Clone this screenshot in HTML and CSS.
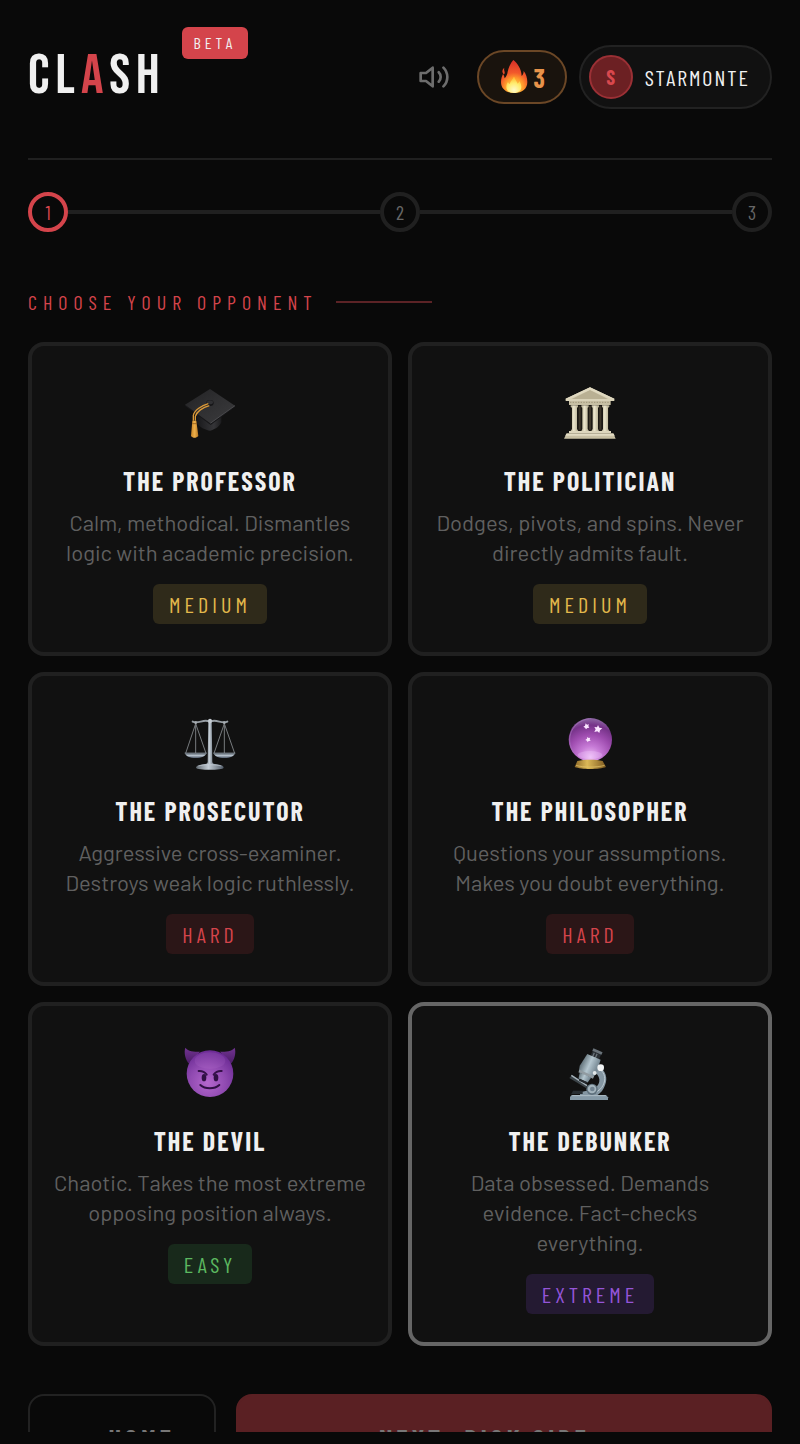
FILE: index.html
```html
<!DOCTYPE html>
<html lang="en">
<head>
    <meta charset="UTF-8">
    <meta name="viewport" content="width=device-width, initial-scale=1.0">
    <title>Clash</title>
    <link rel="stylesheet" href="styles.css">
</head>
<body>
    <main class="app">
        <header class="header">
            <h1 class="logo">CL<span>A</span>SH</h1>
            <span class="beta">BETA</span>
            <div class="header-actions">
                <button class="sound" type="button" aria-label="Sound">
                    <svg viewBox="0 0 24 24" width="32" height="32" fill="none" stroke="currentColor" stroke-width="2" stroke-linejoin="round" stroke-linecap="round">
                        <path d="M11 5 6 9H2v6h4l5 4z"/>
                        <path d="M15.54 8.46a5 5 0 0 1 0 7.07M19.07 4.93a10 10 0 0 1 0 14.14"/>
                    </svg>
                </button>
                <div class="streak">
                    <svg viewBox="302 122 90 102" width="30" height="34">
                        <defs>
                            <radialGradient id="flame" cx="348" cy="204" r="76" gradientUnits="userSpaceOnUse">
                                <stop offset="0" stop-color="#ffe05a"/>
                                <stop offset=".36" stop-color="#ff9a2c"/>
                                <stop offset=".58" stop-color="#f2592b"/>
                                <stop offset="1" stop-color="#dc3428"/>
                            </radialGradient>
                            <radialGradient id="flameCore" cx="347" cy="212" r="34" gradientUnits="userSpaceOnUse">
                                <stop offset="0" stop-color="#fff9c9"/>
                                <stop offset=".6" stop-color="#ffed70"/>
                                <stop offset="1" stop-color="#ffc43b"/>
                            </radialGradient>
                        </defs>
                        <path fill="url(#flame)" d="M345 122c12 10 24 26 25 48 4-4 6-9 6-15 7 8 11 21 11 33 0 20-15 33-39 33-25 0-40-13-40-33 0-11 3-16 6-24 3 4 4 8 5 13 6-7 8-13 9-20 2-11 8-25 17-35z"/>
                        <path fill="#e64a2a" d="M318 145c-7 6-8 14-1 20 6-6-2-11 1-20z"/>
                        <path fill="url(#flameCore)" d="M347 172c4 9 8 13 11 21 3-2 4-5 5-8 4 6 6 12 6 18 0 11-9 18-22 18-14 0-23-7-23-18 0-7 2-11 5-15 1 3 3 5 5 6 2-10 10-14 13-22z"/>
                    </svg>
                    <span>3</span>
                </div>
                <button class="profile" type="button">
                    <span class="avatar">S</span>
                    <span class="username">STARMONTE</span>
                </button>
            </div>
        </header>

        <ol class="steps">
            <li class="step active">1</li>
            <li class="step-line"></li>
            <li class="step">2</li>
            <li class="step-line"></li>
            <li class="step">3</li>
        </ol>

        <h2 class="section-title">CHOOSE YOUR OPPONENT</h2>

        <div class="opponents">
            <button class="card" type="button">
                <svg class="card-icon" viewBox="36 30 168 168">
                    <defs>
                        <linearGradient id="capTop" x1="0" y1="0" x2="1" y2="1">
                            <stop offset="0" stop-color="#222224"/>
                            <stop offset=".5" stop-color="#303032"/>
                            <stop offset="1" stop-color="#3b3b3d"/>
                        </linearGradient>
                        <linearGradient id="tassel" x1="0" y1="0" x2="1" y2="0">
                            <stop offset="0" stop-color="#c98527"/>
                            <stop offset=".5" stop-color="#edaf4a"/>
                            <stop offset="1" stop-color="#b87722"/>
                        </linearGradient>
                        <linearGradient id="capBase" x1="0" y1="0" x2="1" y2="0">
                            <stop offset="0" stop-color="#18181a"/>
                            <stop offset=".7" stop-color="#353538"/>
                            <stop offset="1" stop-color="#1c1c1e"/>
                        </linearGradient>
                    </defs>
                    <path fill="url(#capBase)" d="M79 112v31c9 13 27 22 42 24 17-5 29-14 33-25v-33l-33 23z"/>
                    <path fill="#18181a" d="m45 89 77 56 73-53v4l-73 54-77-57z"/>
                    <path fill="url(#capTop)" d="m120 42 75 50-74 53-76-56z"/>
                    <path fill="none" stroke="#5a5a5d" stroke-width="2" d="m121 145 74-53"/>
                    <ellipse cx="120" cy="84" rx="11" ry="9" fill="#151517"/>
                    <ellipse cx="120" cy="82" rx="9" ry="6" fill="#303033"/>
                    <path fill="none" stroke="#dc9a38" stroke-width="4" d="M115 86c-20 6-42 19-45 35v16M118 92c-20 5-38 18-42 32v13"/>
                    <path fill="url(#tassel)" d="M67 137h12l6 46c-6 7-17 7-22 0z"/>
                    <path stroke="#7b4b15" stroke-width="2" d="M67 146h13"/>
                </svg>
                <span class="card-name">THE PROFESSOR</span>
                <span class="card-desc">Calm, methodical. Dismantles logic with academic precision.</span>
                <span class="level medium">MEDIUM</span>
            </button>

            <button class="card" type="button">
                <svg class="card-icon" viewBox="36 30 168 168">
                    <defs>
                        <linearGradient id="column" x1="0" y1="0" x2="1" y2="0">
                            <stop offset="0" stop-color="#b9b294"/>
                            <stop offset=".4" stop-color="#ece6cd"/>
                            <stop offset="1" stop-color="#b3ab8e"/>
                        </linearGradient>
                    </defs>
                    <path fill="#1c1914" d="M61 91h116v78H61z"/>
                    <path fill="#3c3529" d="M86 93h6v71h-6zm31 0h6v71h-6zm31 0h6v71h-6z"/>
                    <path fill="#d9d2b8" d="m120 37 73 34v7H47v-7z"/>
                    <path fill="#b9b093" d="m120 45 54 27H65z"/>
                    <path fill="#e0d9c0" d="m120 37 73 34-1 4-72-31-72 31-1-4z"/>
                    <path fill="#c8c0a4" d="M57 78h125v12H57z"/>
                    <path stroke="#a0977b" stroke-width="3" stroke-dasharray="4 4" d="M60 82h120"/>
                    <path fill="url(#column)" d="M62 91h22v5l-3 2v64l4 6H62l4-6V98l-4-2z"/>
                    <path fill="url(#column)" d="M94 91h22v5l-3 2v64l4 6H94l3-6V98l-3-2z"/>
                    <path fill="url(#column)" d="M125 91h22v5l-3 2v64l3 6h-23l4-6V98l-3-2z"/>
                    <path fill="url(#column)" d="M156 91h22v5l-4 2v64l4 6h-23l4-6V98l-3-2z"/>
                    <path fill="#ddd6bd" d="M57 168h126v7H57z"/>
                    <path fill="#c8c0a4" d="M50 175h140l7 16H42z"/>
                    <path fill="#e2dbc3" d="M49 176h142l3 6H46z"/>
                </svg>
                <span class="card-name">THE POLITICIAN</span>
                <span class="card-desc">Dodges, pivots, and spins. Never directly admits fault.</span>
                <span class="level medium">MEDIUM</span>
            </button>

            <button class="card" type="button">
                <svg class="card-icon" viewBox="36 30 168 168">
                    <defs>
                        <linearGradient id="steel" x1="0" y1="0" x2="1" y2="0">
                            <stop offset="0" stop-color="#5e666d"/>
                            <stop offset=".45" stop-color="#c3ccd4"/>
                            <stop offset="1" stop-color="#505a66"/>
                        </linearGradient>
                        <linearGradient id="pan" x1="0" y1="0" x2="0" y2="1">
                            <stop offset="0" stop-color="#4c545d"/>
                            <stop offset=".5" stop-color="#b4bfca"/>
                            <stop offset="1" stop-color="#515d6d"/>
                        </linearGradient>
                    </defs>
                    <path fill="none" stroke="#777b7e" stroke-width="3" d="M77 56 47 145M77 56v88M77 56l31 89M163 56l-31 89M163 56v88M163 56l31 89"/>
                    <path fill="none" stroke="#969da3" stroke-width="6" stroke-linecap="round" stroke-linejoin="round" d="M68 50c14 7 29-5 44-2h16c15-3 30 9 44 2"/>
                    <circle cx="77" cy="53" r="4" fill="#a7adb2"/>
                    <circle cx="163" cy="53" r="4" fill="#a7adb2"/>
                    <path fill="url(#steel)" d="M115 47h10l2 125 7 9h-28l7-9z"/>
                    <ellipse cx="120" cy="48" rx="6" ry="7" fill="#c5ccd2"/>
                    <path fill="url(#pan)" d="M44 144h66c-3 9-15 15-33 15s-30-6-33-15zM130 144h66c-3 9-15 15-33 15s-30-6-33-15z"/>
                    <path fill="none" stroke="#8e98a2" stroke-width="2" d="M44 144h66M130 144h66"/>
                    <path fill="url(#steel)" d="M92 179c15-4 41-4 56 0 8 1 13 4 13 9-2 8-80 8-83 0 0-5 6-8 14-9z"/>
                    <path fill="none" stroke="#c3ccd4" stroke-width="2" d="M85 183c17-5 52-5 69 0"/>
                </svg>
                <span class="card-name">THE PROSECUTOR</span>
                <span class="card-desc">Aggressive cross-examiner. Destroys weak logic ruthlessly.</span>
                <span class="level hard">HARD</span>
            </button>

            <button class="card" type="button">
                <svg class="card-icon" viewBox="36 30 168 168">
                    <defs>
                        <radialGradient id="crystal" cx=".5" cy=".9" r=".9">
                            <stop offset="0" stop-color="#efc0f6"/>
                            <stop offset=".28" stop-color="#c67ad6"/>
                            <stop offset=".58" stop-color="#9d4bae"/>
                            <stop offset=".82" stop-color="#763389"/>
                            <stop offset="1" stop-color="#8f6aa6"/>
                        </radialGradient>
                        <linearGradient id="gold" x1="0" y1="0" x2="1" y2="0">
                            <stop offset="0" stop-color="#8c6727"/>
                            <stop offset=".4" stop-color="#dcb957"/>
                            <stop offset="1" stop-color="#7d5920"/>
                        </linearGradient>
                    </defs>
                    <circle cx="121" cy="104" r="65" fill="url(#crystal)"/>
                    <path fill="none" stroke="#a877bd" stroke-width="2" d="M72 143C42 101 67 48 118 41"/>
                    <ellipse cx="120" cy="150" rx="37" ry="12" fill="#f3caff" opacity=".3"/>
                    <path fill="url(#gold)" d="M82 168c22-5 55-5 76 0l10 18c-20 8-74 8-94 0z"/>
                    <path fill="none" stroke="#e5c76c" stroke-width="2" d="M78 181c23 7 62 7 86 0"/>
                    <path fill="#fbe6ff" d="m144 60 4 8 9 2-7 6-2 8-6-5-9 2 4-8-4-7 8 1zM107 55l4 4 6-1-2 5 3 5-6 1-4 4-3-5-5-3 5-3zM112 96l4 3 5-1-2 5 3 4-6 1-3 4-2-5-5-2 5-4z"/>
                </svg>
                <span class="card-name">THE PHILOSOPHER</span>
                <span class="card-desc">Questions your assumptions. Makes you doubt everything.</span>
                <span class="level hard">HARD</span>
            </button>

            <button class="card" type="button">
                <svg class="card-icon" viewBox="36 30 168 168">
                    <defs>
                        <radialGradient id="devilFace" cx=".45" cy=".7" r=".75">
                            <stop offset="0" stop-color="#b467cd"/>
                            <stop offset=".5" stop-color="#914bb2"/>
                            <stop offset="1" stop-color="#65258f"/>
                        </radialGradient>
                        <linearGradient id="horn" x1="0" y1="0" x2="0" y2="1">
                            <stop offset="0" stop-color="#713491"/>
                            <stop offset="1" stop-color="#4c1b67"/>
                        </linearGradient>
                    </defs>
                    <path fill="url(#horn)" d="M46 38c9 11 25 12 44 12L58 87C46 75 41 53 46 38zM194 38c-9 11-25 12-44 12l32 37c12-12 17-34 12-49z"/>
                    <circle cx="120" cy="116" r="70" fill="url(#devilFace)"/>
                    <ellipse cx="120" cy="77" rx="46" ry="25" fill="#c580df" opacity=".14"/>
                    <ellipse cx="102" cy="128" rx="7" ry="11" fill="#301044"/>
                    <ellipse cx="138" cy="128" rx="7" ry="11" fill="#301044"/>
                    <path fill="none" stroke="#351149" stroke-width="6" stroke-linecap="round" d="M86 108c10-1 18 3 24 11M155 108c-10-1-18 3-24 11"/>
                    <path fill="none" stroke="#301044" stroke-width="6" stroke-linecap="round" d="M91 150c14 13 43 13 57 0"/>
                </svg>
                <span class="card-name">THE DEVIL</span>
                <span class="card-desc">Chaotic. Takes the most extreme opposing position always.</span>
                <span class="level easy">EASY</span>
            </button>

            <button class="card highlighted" type="button">
                <svg class="card-icon" viewBox="36 30 168 168">
                    <defs>
                        <linearGradient id="scope" x1="0" y1="0" x2="1" y2="0">
                            <stop offset="0" stop-color="#607078"/>
                            <stop offset=".45" stop-color="#b4c6cf"/>
                            <stop offset="1" stop-color="#6c7e89"/>
                        </linearGradient>
                    </defs>
                    <path fill="#8496a2" d="M143 94c25 11 31 36 22 57-4 13-13 24-25 31H90v-10l30-7c19-4 29-16 28-32-1-11-8-18-18-23z"/>
                    <path fill="none" stroke="#bdcad1" stroke-width="3" d="M148 102c18 12 20 32 11 49-5 10-13 17-23 21"/>
                    <path fill="#3b4348" d="m66 120 46 31-4 8-50-30z"/>
                    <path stroke="#a5b2ba" stroke-width="4" d="m64 121 47 31"/>
                    <path fill="#272d31" d="M69 167h29v10H64z"/>
                    <!-- tube, tilted over the stage -->
                    <g transform="rotate(24 117 94)">
                        <path fill="#282d32" d="M108 46h28v19h-28z"/>
                        <path fill="#697279" d="M107 39h30v8h-30zM113 50h4v14h-4zm9 0h4v14h-4z"/>
                        <path fill="url(#scope)" d="M97 62h44l5 42-4 15H95l-4-15z"/>
                        <path fill="#919ba1" d="M95 115h48v8H95z"/>
                        <path fill="url(#scope)" d="M99 122h38l-4 18h-30z"/>
                        <path fill="#24292e" d="M107 139h24v7h-24z"/>
                    </g>
                    <circle cx="126" cy="163" r="17" fill="#5e707c"/>
                    <circle cx="126" cy="162" r="13" fill="#a4b4bd"/>
                    <circle cx="127" cy="162" r="7" fill="#718391"/>
                    <path fill="#8599a6" d="M65 180h103l6 7v8H60v-9z"/>
                    <path stroke="#c2cfd6" stroke-width="2" d="M67 182h100"/>
                    <circle cx="152" cy="98" r="10" fill="#f0f3f4"/>
                    <circle cx="134" cy="114" r="6" fill="#e0e6e8"/>
                </svg>
                <span class="card-name">THE DEBUNKER</span>
                <span class="card-desc">Data obsessed. Demands evidence. Fact-checks everything.</span>
                <span class="level extreme">EXTREME</span>
            </button>
        </div>

        <div class="footer-actions">
            <button class="btn home" type="button">← HOME</button>
            <button class="btn next" type="button">NEXT: PICK SIDE →</button>
        </div>
    </main>
</body>
</html>
```
FILE: styles.css
```css
* {
    box-sizing: border-box;
}

body {
    margin: 0;
    background-color: #090909;
    color: #f0f0f0;
    font-family: "Barlow", "Roboto", sans-serif;
}

button {
    font: inherit;
    color: inherit;
    cursor: pointer;
}

.app {
    height: calc(100vh - 12px);
    padding: 0 28px;
    overflow: hidden;
}

.beta,
.streak,
.profile,
.step,
.section-title,
.card-name,
.level,
.btn {
    font-family: "Barlow Condensed", "Roboto Condensed", "Liberation Sans Narrow", "Roboto", sans-serif;
}

/* header */
.header {
    display: flex;
    align-items: center;
    height: 160px;
    padding-bottom: 4px;
    border-bottom: 2px solid #202020;
}

.logo {
    margin: 0;
    font-family: "Bebas Neue", "Barlow Condensed", "Roboto", sans-serif;
    font-size: 56px;
    font-weight: normal;
    line-height: 56px;
    letter-spacing: 6px;
}

.logo span {
    color: #d4444b;
}

.beta {
    align-self: flex-start;
    margin: 27px 0 0 16px;
    padding: 0 12px;
    border-radius: 6px;
    background-color: #d4444b;
    font-size: 16px;
    line-height: 32px;
    letter-spacing: 4px;
}

.header-actions {
    display: flex;
    align-items: center;
    gap: 12px;
    margin-left: auto;
}

.sound {
    display: flex;
    margin-right: 15px;
    padding: 0;
    border: none;
    background: none;
    color: #6d6d6d;
}

.streak {
    display: flex;
    align-items: center;
    gap: 4px;
    height: 54px;
    padding: 0 20px;
    border: 2px solid #6b4726;
    border-radius: 27px;
    background-color: #19130d;
    color: #e8934a;
    font-size: 26px;
    font-weight: bold;
}

.profile {
    display: flex;
    align-items: center;
    gap: 12px;
    height: 64px;
    padding: 0 20px 0 8px;
    border: 2px solid #222;
    border-radius: 32px;
    background-color: #111;
    font-size: 22px;
    letter-spacing: 2px;
}

.avatar {
    width: 44px;
    height: 44px;
    border: 2px solid #9b3035;
    border-radius: 50%;
    background-color: #6c2023;
    color: #d9484e;
    font-size: 20px;
    font-weight: bold;
    line-height: 40px;
    letter-spacing: 0;
    text-align: center;
}

/* progress */
.steps {
    display: flex;
    align-items: center;
    margin: 32px 0 56px;
    padding: 0;
    list-style: none;
}

.step {
    width: 40px;
    height: 40px;
    border: 4px solid #202020;
    border-radius: 50%;
    color: #666;
    font-size: 20px;
    line-height: 32px;
    text-align: center;
}

.step.active {
    border-color: #d4444b;
    color: #d4444b;
}

.step-line {
    flex: 1;
    height: 4px;
    background-color: #202020;
}

.section-title {
    display: flex;
    align-items: center;
    gap: 18px;
    margin: 0 0 26px;
    color: #d4444b;
    font-size: 20px;
    font-weight: normal;
    line-height: 28px;
    letter-spacing: 6px;
}

.section-title::after {
    content: "";
    width: 96px;
    height: 2px;
    background-color: #5c2326;
}

/* opponents */
.opponents {
    display: grid;
    grid-template-columns: 1fr 1fr;
    gap: 16px;
}

.card {
    display: flex;
    flex-direction: column;
    align-items: center;
    padding: 39px 20px 28px;
    border: 4px solid #202020;
    border-radius: 16px;
    background-color: #111;
    text-align: center;
}

.card.highlighted {
    border-color: #666;
}

.card-icon {
    width: 56px;
    height: 56px;
    margin-bottom: 24px;
}

.card-name {
    margin-bottom: 10px;
    font-size: 26px;
    font-weight: bold;
    line-height: 32px;
    letter-spacing: 2px;
}

.card-desc {
    margin-bottom: 17px;
    color: #606060;
    font-size: 22px;
    line-height: 30px;
}

.level {
    padding: 0 16px;
    border-radius: 6px;
    font-size: 22px;
    line-height: 40px;
    letter-spacing: 4px;
}

.medium {
    background-color: #2f2a1a;
    color: #e2b84b;
}

.hard {
    background-color: #2b1617;
    color: #d4444b;
}

.easy {
    background-color: #18291b;
    color: #5cb860;
}

.extreme {
    background-color: #241a32;
    color: #9455d8;
}

/* bottom buttons */
.footer-actions {
    display: flex;
    gap: 20px;
    margin-top: 48px;
}

.btn {
    height: 90px;
    border: 2px solid #222;
    border-radius: 16px;
    background: none;
    color: #777;
    font-size: 26px;
    font-weight: bold;
    letter-spacing: 4px;
}

.home {
    flex: 0 0 188px;
}

.next {
    flex: 1;
    border-color: #5a2023;
    background-color: #5a2023;
}
```
